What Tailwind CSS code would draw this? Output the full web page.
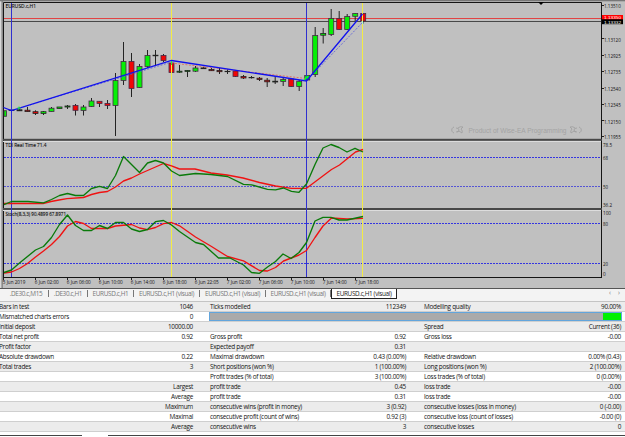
<!DOCTYPE html>
<html lang="en"><head><meta charset="utf-8"><title>Strategy tester</title>
<script src="https://cdn.jsdelivr.net/npm/@tailwindcss/browser@4"></script></head>
<body class="w-[625px] h-[437px] overflow-hidden bg-white flex flex-col font-['Open_Sans','Noto_Sans',sans-serif] text-[#141414]">
<svg class="block shrink-0" width="625" height="288" viewBox="0 0 625 288">
<rect width="625" height="288" fill="#c0c0c0"/>
<rect width="2" height="288" fill="#d8d8d8"/><rect x="1.5" width="1.2" height="288" fill="#777"/>
<rect width="625" height="1.3" fill="#777"/>
<g fill="none" stroke="#151515"><path d="M3.5 277.5V2.5H601.5V277.5"/><path d="M3 277.5H602"/></g>
<rect x="3" y="138.8" width="599" height="2" fill="#484848"/><rect x="3" y="141" width="598" height="1" fill="#ddd"/>
<rect x="3" y="208" width="599" height="2" fill="#484848"/><rect x="3" y="210" width="598" height="1" fill="#ddd"/>
<rect x="4" y="18" width="597" height="1" fill="#e24444"/><rect x="4" y="21" width="597" height="1" fill="#484848"/>
<path d="M538 2h6l-3 3z"/>
<g stroke="#3535e0" stroke-dasharray="2 1"><path d="M4 157.5H601M4 223.5H601M4 263.5H601"/><path d="M4 186.5H601" stroke="#5555d4"/></g>
<g fill="#a3a3a3" font-family="Liberation Sans" font-size="7.7"><text x="468.5" y="132.5" textLength="98" lengthAdjust="spacingAndGlyphs">Product of Wise-EA Programming</text></g>
<g fill="none" stroke="#a0a0a0" stroke-width=".9"><path d="M454 127c-3 1-3 5 0 6m2-5q3 0 3 2t-3 2m2-4q2-2 5-1l-2 2q2 2 1 4l-3-2-2 1"/><path d="M579 127c3 1 3 5 0 6m-2-5q-3 0-3 2t3 2m-2-4q-2-2-5-1l2 2q-2 2-1 4l3-2 2 1"/></g>
<g id="candles"></g>
<path d="M171.5 3V277M362.5 3V277" stroke="#f2ec45"/>
<path d="M11.5 3V277M306.5 3V277" stroke="#3030cf"/>
<g fill="none"><path d="M20 108L171.5 62M312 75L363 22" stroke="#5555dd" stroke-width=".8" stroke-dasharray="2 1.5"/><path d="M171.5 63L306 78.5" stroke="#e86050" stroke-width=".8" stroke-dasharray="2 1.5"/>
<path d="M3.5 107.5L11.5 110.5L171.5 60.5L306.5 81L362.5 14" stroke="#1111ee" stroke-width="1.3"/></g>
<path d="M19 106.5v3m-1.7-1.5h3.4M171.5 61v4" stroke="#2e4"/><path d="M304 80l4-4" stroke="#0f3" stroke-width="1.5"/><path d="M362 21l1 3" stroke="#aff0cf" stroke-width="1.5"/>
<g fill="none" stroke-width="1.35" stroke-linejoin="round">
<path stroke="#f01212" d="M4 203.5H43L51 201.5L59 200L67 198.7L83.5 197.5L91.5 194.5L99.5 192.5L107.5 191.5L115.5 187L123.5 181L131.5 178L139.5 174L163.5 163.5L171.5 165.8L179.5 169H195L211 173L227 175L243 178L259.5 182.5L275.5 186L291.5 188.3H306.5L331.5 169.5L339.5 165L355.5 152L363 149.5"/>
<path stroke="#0a7a0a" d="M4 204.7L11.5 201.5H28L43.5 202.8L51.5 199.5L59.5 195.5L67.5 193.5L75.5 195.5H83.5L91.5 188.5L99.5 186.3L107.5 188.5L115.5 175.5L123.5 156.5L139.5 172.5L147.5 163L155.5 160.5L163.5 163L171.5 171L179.5 175.5L195.5 173.5L211 174.5L227.5 176.5L243.5 184.3L251.5 184.8L267.5 189.3L275.5 189.8L283.5 188L291.5 191.3L299 192.3L306.5 184L315 164.5L323 148L331 144.5L339 147.5L347 152L355 148.3L363 152"/>
<path stroke="#f01212" d="M4 273L11.5 272L19.5 268.5L27.5 263.5L35.5 257L43.5 251L51.5 244.5L59.5 236.5L67.5 226L75.5 221.5L83.5 223.5L91.5 228.5H107.5L115.5 226L131.5 224.5L139.5 228L147.5 229.7L155.5 227.5L163.5 223.7L171.5 222.5L179.5 225.8L195.5 237L211.5 246.5L227.5 256.5L243.5 260.8L259.5 270.5L267.5 271L275.5 267.5L283.5 261L299 255L306.5 250.5L315 237.5L323 226L331.5 218L347 219L363 218.3"/>
<path stroke="#0a7a0a" d="M4 272.5L11.5 270L19.5 263L35.5 250L43.5 246.5L51.5 237.5L59.5 224.5L67.5 215L75.5 225.5L83.5 230.5H91.5L99.5 225.5L107.5 228.5L115.5 222.5H123.5L131.5 229L139.5 231.5L147.5 229.5L155.5 221.7L163.5 220.5L171.5 225L179.5 231.5L195.5 242.5L203.5 244.5L218.5 258H230L243.5 265L251.5 272.5L259.5 273.3L267.5 267L275.5 261.5L283 254L291 258.5L299 252.5L306.5 242.5L315 221L323 217.3H331L339 220H347L363 216.5"/></g>
<g fill="#111" stroke="#111" stroke-width=".12" font-family="Open Sans" font-size="5.9">
<text x="5.5" y="8.3" textLength="30.5" lengthAdjust="spacingAndGlyphs">EURUSD.c,H1</text><text x="5.5" y="147" textLength="41" lengthAdjust="spacingAndGlyphs">TDI Real Time 71.4</text><text x="5.5" y="216" textLength="60.5" lengthAdjust="spacingAndGlyphs">Stoch(8,3,3) 90.4899 67.8971</text></g>
<g id="scale" fill="#111" stroke-width=".12" font-family="Open Sans" font-size="5.2"></g>
</svg>
<nav class="h-[13px] shrink-0 flex bg-[#f3f3f3] border-t border-[#555] text-[6.4px] leading-[10px] text-[#777] relative">
<div id="tabs" class="flex h-[10px] tracking-[-0.36px]"></div>
<span class="absolute left-[609px] top-[-1px]">‹</span><span class="absolute left-[618px] top-[-1px]">›</span>
</nav>
<main id="report" class="flex-1 border-t border-[#c4c4c4] text-[6.4px] leading-[9px] tracking-[-0.28px]"></main>
<footer class="h-[2px] shrink-0 flex justify-between bg-white"><i class="w-[82px] h-px bg-[#444]"></i><i class="w-[517px] h-px bg-[#444]"></i></footer>
<script>
const bars=[[110.7,116.3,'g'],[110,110.5,'k'],[109.8,110.8,'k',107,110.8],[110.2,111.6,'r',107,111.6],[111.7,113.4,'r',110.3,115],[111.7,113.4,'g',111,115],[108.2,111.5,'g',107,111.5],[107,108.5,'g'],[106,107,'g',105,109],[105.5,110.3,'r',104,115.5],[107,110.5,'g',105,115.5],[101,106.5,'g',98,107],[101.3,103.5,'r',101,107],[103.5,105.5,'r',100,109],[80.5,105.5,'g',73,136],[61.5,80.5,'g',42,85],[61.5,88.5,'r',53,97],[66.5,87.5,'g',64,88],[55.5,66.5,'g',50,68],[55.2,55.8,'k',50,66],[55.5,60.5,'r',54,62],[63,72.5,'r',60,78],[71.2,72.2,'g',65,73],[70.5,71.5,'g',70,77],[68,71.2,'g',66,72],[67.9,68.7,'r',67,69],[69.5,70.7,'r',68,71],[70.5,71.7,'r',68,74],[71.3,71.7,'k',69,74],[71,76.5,'r',70,77],[76.5,78,'r',75,79],[77.4,77.8,'k',76,78.5],[78.2,79.5,'r',77,81],[80.2,81.8,'r',78,87],[81.2,82,'g',76,84],[79.5,81.5,'g',78,86],[79,86.5,'r',78,87],[81.3,86.5,'g',80,91],[75.5,80,'g'],[35.5,74.5,'g',27,77],[33.5,35.2,'g',28,43.5],[18.5,34.5,'g',9,36],[18.5,29.5,'r',11,30],[16.5,29.5,'g',14,30],[13.5,16.3,'g',13,21],[13.5,21,'r',13,24]];
const fill={g:'#06f006',r:'#f00606',k:'#111'};
document.getElementById('candles').innerHTML=bars.map(([a,b,c,h,l],i)=>{const x=3.5+8*i-(i>32?.3:0);const left=i?x-2.5:4,w=i?5:2.5;return `<path d="M${x} ${h??a}V${l??b}" stroke="#111" stroke-width=".9"/><rect x="${left}" y="${a}" width="${w}" height="${b-a}" fill="${fill[c]}" stroke="${b-a<2?'#222':'#472847'}" stroke-width=".8"/>`}).join('');
const T=(x,y,s,w)=>`<text x="${x}" y="${y}"${w?` textLength="${w}" lengthAdjust="spacingAndGlyphs"`:''}>${s}</text>`;
let out='';
[['1.13510',6],['1.13120',39.3],['1.12925',55.5],['1.12735',72],['1.12540',88.5],['1.12345',104.8],['1.12150',121.3],['1.11955',136.9]].forEach(([s,y])=>{out+=`<path d="M602 ${Math.round(y)-.5}h2" stroke="#222" stroke-width="1"/>`+T(604,y+2.2,s,16.8)});
out+='<rect x="602" y="15" width="21" height="5" fill="#f00"/><rect x="602" y="19.3" width="21" height="4.9" fill="#000"/><g fill="#fff" font-family="Liberation Sans" font-size="4.2">'+T(604,18.7,'1.13350',17)+T(604,23.6,'1.13332',17)+'</g>';
[['78.5',144.6,9],['68',158,5],['50',186.7,5],['36.2',205.2,9],['100',213.3,8],['80',223.7,5],['20',264,5],['0',274.1,2.7]].forEach(([s,y,w])=>out+=T(603,y+2,s,w));
out+='<g font-size="5.9">';
['5 Jun 2019','6 Jun 02:00','6 Jun 06:00','6 Jun 10:00','6 Jun 14:00','6 Jun 18:00','6 Jun 22:05','7 Jun 02:00','7 Jun 06:00','7 Jun 10:00','7 Jun 14:00','7 Jun 18:00'].forEach((s,i)=>out+=`<path d="M${3.5+i*32} 278v2" stroke="#222" stroke-width="1"/>`+T(2.8+i*32,284,s,i?24:22.5));
document.getElementById('scale').innerHTML=out+'</g>';
document.getElementById('tabs').innerHTML=[['.DE30.c,M15',49],['.DE30.c,H1',39],['EURUSD.c,H1',46],['EURUSD.c,H1 (visual)',66],['EURUSD.c,H1 (visual)',66],['EURUSD.c,H1 (visual)',65],['EURUSD.c,H1 (visual)',66]].map(([s,w],i)=>`<div class="${i==6?'border border-t-0 border-[#222] bg-white text-[#222] h-[10px]':'border-r border-[#777] h-[7px] mt-px leading-[8px] '+(i==0?'pl-[4px]':'')} flex justify-center whitespace-nowrap" style="width:${w}px"><span>${s}</span></div>`).join('');
const rows=[['Bars in test','1046','Ticks modelled','112349','Modelling quality','90.00%'],['Mismatched charts errors','0'],['Initial deposit','10000.00','','','Spread','Current (36)'],['Total net profit','0.92','Gross profit','0.92','Gross loss','-0.00'],['Profit factor','','Expected payoff','0.31','',''],['Absolute drawdown','0.22','Maximal drawdown','0.43 (0.00%)','Relative drawdown','0.00% (0.43)'],['Total trades','3','Short positions (won %)','1 (100.00%)','Long positions (won %)','2 (100.00%)'],['','','Profit trades (% of total)','3 (100.00%)','Loss trades (% of total)','0 (0.00%)'],['','Largest','profit trade','0.45','loss trade','-0.00'],['','Average','profit trade','0.31','loss trade','-0.00'],['','Maximum','consecutive wins (profit in money)','3 (0.92)','consecutive losses (loss in money)','0 (-0.00)'],['','Maximal','consecutive profit (count of wins)','0.92 (3)','consecutive loss (count of losses)','-0.00 (0)'],['','Average','consecutive wins','3','consecutive losses','0']];
document.getElementById('report').innerHTML=rows.map((r,i)=>`<div class="h-[10px] flex items-stretch whitespace-nowrap border-b border-[#cfcfcf] ${i%2?'bg-white':'bg-[#ececec]'}"><div class="w-[193px] flex justify-between"><span class="-ml-[1px]">${r[0]}</span><span>${r[1]}</span></div>`+(i==1?'<div class="ml-[16px] w-[413px] h-[9px] flex justify-end bg-[#aaaaaa] border border-[#62a5dc]"><i class="w-[18px] bg-[#00f000]"></i></div>':`<div class="ml-[17px] w-[196px] flex justify-between"><span>${r[2]}</span><span>${r[3]}</span></div><div class="ml-[18px] w-[197px] flex justify-between"><span>${r[4]}</span><span>${r[5]}</span></div>`)+'</div>').join('');
</script>
</body></html>
